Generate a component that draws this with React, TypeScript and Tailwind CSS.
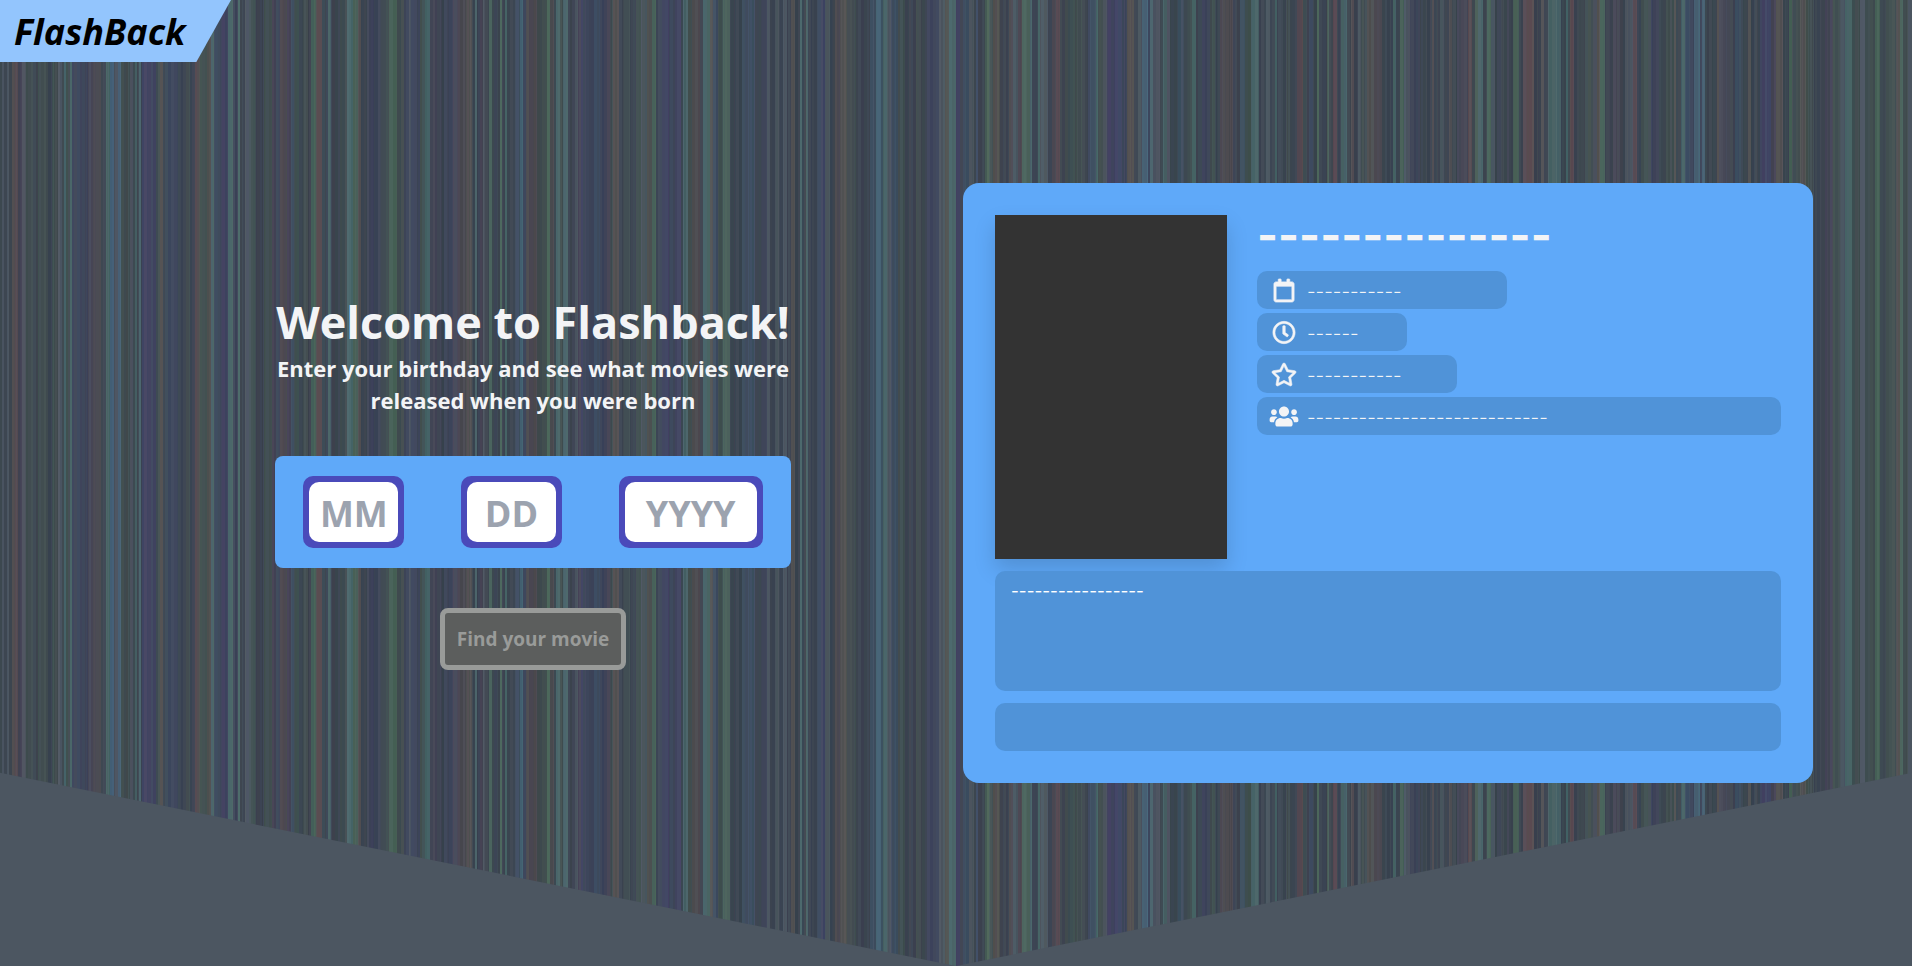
import type { ReactNode } from "react";
import { FaRegCalendar, FaRegClock, FaRegStar, FaUsers } from "react-icons/fa";

type Rgb = [number, number, number];

const TONES: Record<string, Rgb> = {
  d: [61, 70, 82],
  n: [62, 70, 90],
  b: [64, 79, 98],
  B: [72, 99, 118],
  i: [66, 69, 98],
  p: [71, 72, 88],
  r: [76, 74, 82],
  R: [88, 76, 84],
  w: [82, 82, 84],
  s: [76, 86, 97],
  g: [66, 79, 82],
  G: [74, 98, 90],
  T: [73, 100, 104],
};

const BARS =
  "0g 2s 4d 7s 9d 12w 15R 18p 22s 26g 33d 38g 48d 52g 58s 62d 64T 66g 70T 72n 88p 93r 99w 101d 106T 110B 114s 118B 121g 130s 133d 135T 137d 139T 141d 142i 156g 160w 163d 165b 168n 178d 186g 190d 195R 197w 200g 207w 211T 214b 218n 222i 228T 233n 238T 240d 245s 251g 256d 264g 272p 276n 280r 287p 291b 294g 299d 303g 308d 311G 316w 317R 322d 328T 331d 340g 347T 353G 358w 361d 367n 380d 386g 389G 397g 404n 409s 411n 420g 425T 430p 437d 444n 453p 458r 466w 472d 475T 477d " +
  "480p 483s 485d 489G 492d 500G 502d 505T 507d 515b 520B 523n 526r 537g 547G 550r 554d 556T 560g 563T 568d 575s 578p 581i 583n 594b 600n 607p 610g 613w 619d 624g 630d 636g 641s 647w 652G 656n 662i 669n 675i 681d 683T 688g 692r 700d 703T 710w 713b 718g 723G 730d 742b 755d 762n 767s 770d 775s 779d 783s 787d 791w 795d 800T 802d 806T 808d 817b 821i 825s 830d 835r 840w 847g 856d 870b 876B 881b 883T 887s 891b 898g 905d 916g 921d 927n 939s 945w 949T 956i " +
  "960p 963b 969s 974d 976b 978d 985G 990g 993w 1000d 1009r 1013s 1018r 1022G 1030T 1032d 1038T 1040s 1048d 1052r 1056R 1060d 1065g 1082d 1088b 1096T 1098g 1103s 1107i 1122n 1127w 1134d 1138s 1142B 1148n 1150T 1153s 1160d 1163T 1167s 1170d 1178b 1184d 1187g 1192T 1196d 1202n 1210g 1215d 1220r 1233d 1240b 1245g 1251T 1259d 1266s 1270d 1275T 1277d 1286g 1290d 1297R 1303d 1309b 1313d 1317G 1319d 1327G 1329d 1333R 1337d 1341T 1347d 1351w 1354d 1358s 1361g 1367w 1374r 1382d 1393T 1396d 1400G 1404s 1410n 1420d 1432w 1434d " +
  "1440s 1444d 1449w 1452d 1457p 1468R 1472d 1475G 1478T 1483d 1487G 1491s 1495d 1513G 1519d 1523R 1534d 1541w 1544d 1548T 1556T 1561d 1566T 1568d 1570R 1574d 1585g 1593s 1597w 1600G 1605d 1613p 1620d 1625s 1633R 1637d 1641g 1651n 1659d 1666g 1674w 1676d 1681T 1685b 1690n 1694B 1700n 1702B 1705d 1717w 1719p 1727d 1735b 1741d 1748w 1751d 1760i 1771p 1776w 1783d 1789G 1792g 1800w 1806g 1814d 1825p 1833g 1840s 1845T 1852g 1860s 1865g 1875G 1880d 1886g 1896w 1900G 1903g 1908s";

const SPAN = 1912;

function buildStripes() {
  const bars = BARS.split(" ").map((b) => ({
    x: parseInt(b, 10),
    tone: TONES[b[b.length - 1]],
  }));
  let seed = 20011;
  const rand = () => {
    seed = (seed * 1103515245 + 12345) % 2147483648;
    return seed / 2147483648;
  };
  const stripes: { x: number; w: number; fill: string }[] = [];
  bars.forEach((bar, i) => {
    const end = i + 1 < bars.length ? bars[i + 1].x : SPAN;
    let x = bar.x;
    while (x < end) {
      const w = Math.min(end - x, 1 + Math.floor(rand() * 3));
      const light = rand() * 10 - 5;
      const c = bar.tone.map((v) => Math.round(v + light + rand() * 6 - 3));
      stripes.push({ x, w, fill: `rgb(${c[0]},${c[1]},${c[2]})` });
      x += w;
    }
  });
  return stripes;
}

const STRIPES = buildStripes();

function Backdrop() {
  return (
    <div className="absolute inset-0 -z-10" aria-hidden="true">
      <svg
        className="h-full w-full"
        viewBox={`0 0 ${SPAN} 10`}
        preserveAspectRatio="none"
        shapeRendering="crispEdges"
      >
        {STRIPES.map((s) => (
          <rect key={s.x} x={s.x} y={0} width={s.w} height={10} fill={s.fill} />
        ))}
      </svg>
      <div className="absolute inset-0 bg-[#4c5661] [clip-path:polygon(0_80%,50%_100%,100%_80%,100%_100%,0_100%)]" />
    </div>
  );
}

function DateField({ label, placeholder, size }: { label: string; placeholder: string; size: string }) {
  return (
    <div className="rounded-[10px] bg-[#4a4aba] p-1.5">
      <input
        type="text"
        inputMode="numeric"
        aria-label={label}
        placeholder={placeholder}
        className={`block h-15 rounded-[10px] bg-white pt-0.5 text-center text-4xl font-bold text-gray-800 outline-none placeholder:text-[#9ca3af] ${size}`}
      />
    </div>
  );
}

function Fact({ icon, text, size }: { icon: ReactNode; text: string; size: string }) {
  return (
    <li className={`flex h-9.5 items-center gap-2 rounded-[10px] bg-[#5093d8] pl-3 ${size}`}>
      <span className="flex shrink-0 [&>svg]:h-[23px] [&>svg]:w-7.5 [&>svg]:overflow-visible">{icon}</span>
      <span className="pt-1 font-['Inter',sans-serif] text-[19px] font-light">{text}</span>
    </li>
  );
}

export default function App() {
  return (
    <div className="relative isolate flex min-h-screen flex-col overflow-hidden font-['Open_Sans','Noto_Sans',sans-serif] text-gray-100">
      <Backdrop />
      <header className="flex">
        <a
          href="#"
          className="flex h-[62px] w-[231px] items-center bg-[#93c5fd] pt-0.5 pl-3.5 text-4xl font-bold text-black italic [clip-path:polygon(0_0,100%_0,85%_100%,0_100%)]"
        >
          FlashBack
        </a>
      </header>

      <main className="flex flex-1 items-center px-[99px] pb-[62px]">
        <section className="flex flex-1 flex-col items-center pt-0.5 pl-1">
          <h1 className="text-[45px] leading-12 font-bold">Welcome to Flashback!</h1>
          <p className="mt-1.5 w-[540px] text-center text-[22px] leading-8 font-bold">
            Enter your birthday and see what movies were released when you were born
          </p>
          <form className="flex flex-col items-center" onSubmit={(e) => e.preventDefault()}>
            <div className="mt-10 flex h-28 w-[516px] items-center justify-around rounded-lg bg-[#5fa9f9]">
              <DateField label="Month" placeholder="MM" size="w-[89px]" />
              <DateField label="Day" placeholder="DD" size="w-[89px]" />
              <DateField label="Year" placeholder="YYYY" size="w-[132px]" />
            </div>
            <button
              type="submit"
              disabled
              className="mt-10 h-[62px] w-[186px] rounded-lg border-[5px] border-[#999b99] bg-[#5c5e5d] text-[19px] font-bold text-[#999b99]"
            >
              Find your movie
            </button>
          </form>
        </section>

        <article className="flex w-[850px] flex-col gap-3 rounded-2xl bg-[#5fa9f9] p-8">
          <div className="flex gap-7.5">
            <div className="h-86 w-58 shrink-0 bg-[#333333] shadow-[0_10px_20px_rgba(0,0,0,0.15)]" />
            <div className="flex-1">
              <h2 className="h-14 pt-0.5 font-['Inter',sans-serif] text-[45px] leading-9 font-bold">--------------</h2>
              <ul className="flex flex-col gap-1">
                <Fact icon={<FaRegCalendar strokeWidth={16} />} text="-----------" size="w-[250px]" />
                <Fact icon={<FaRegClock strokeWidth={12} />} text="------" size="w-[150px]" />
                <Fact icon={<FaRegStar strokeWidth={12} />} text="-----------" size="w-[200px]" />
                <Fact icon={<FaUsers />} text="----------------------------" size="w-full" />
              </ul>
            </div>
          </div>
          <p className="h-30 rounded-[10px] bg-[#5093d8] px-4 py-2 font-['Inter',sans-serif] text-[17px] leading-6 text-white">
            -----------------
          </p>
          <div className="h-12 rounded-[10px] bg-[#5093d8]" />
        </article>
      </main>
    </div>
  );
}
